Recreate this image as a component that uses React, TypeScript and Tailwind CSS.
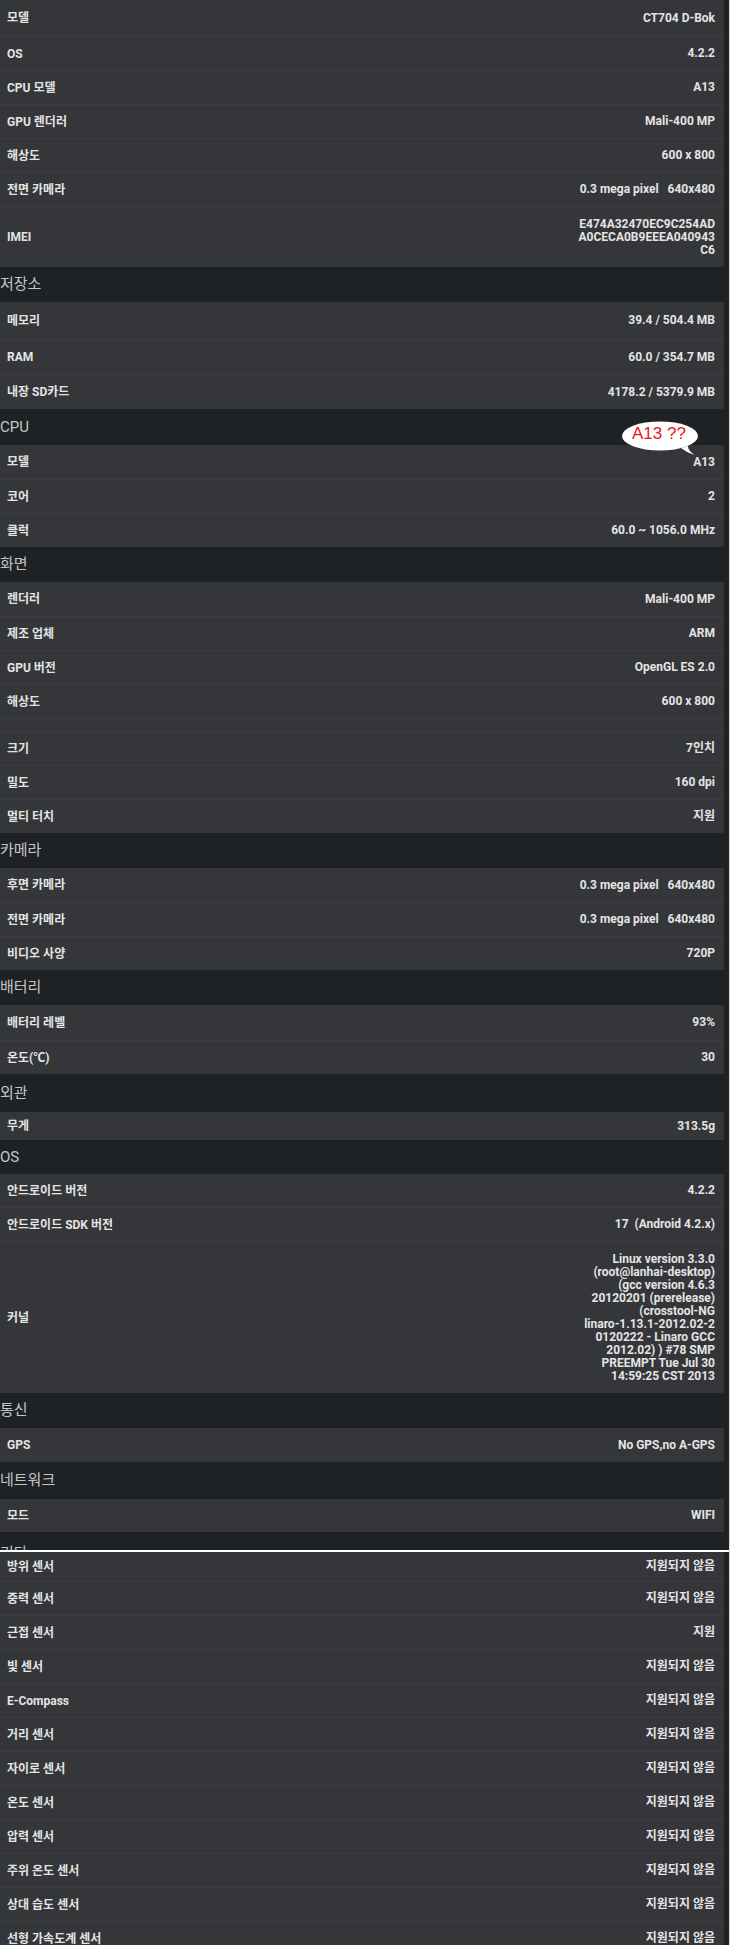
import React from "react";

type Row = { label: string; value: React.ReactNode; h?: string };

const font = "font-['Roboto','Noto_Sans_CJK_KR',sans-serif]";

function InfoRow({ label, value, h = "h-[34px]", first = false }: Row & { first?: boolean }) {
  return (
    <div
      className={`flex items-center justify-between pl-[7px] pr-[9px] ${h} ${
        first ? "" : "border-t border-[#3c3d41]"
      }`}
    >
      <span className="text-[12px] font-bold text-[#e4e4e4]">{label}</span>
      <span className="whitespace-pre text-right text-[12px] font-bold leading-[13px] text-[#e4e4e4]">
        {value}
      </span>
    </div>
  );
}

function Card({ rows }: { rows: Row[] }) {
  return (
    <div className="mr-[5px] overflow-hidden rounded-r-[2px] bg-[#353639]">
      {rows.map((r, i) => (
        <InfoRow key={r.label + i} {...r} first={i === 0} />
      ))}
    </div>
  );
}

function Header({ title, h = "h-[35px]" }: { title: string; h?: string }) {
  return (
    <div className={`flex items-center ${h}`}>
      <span className="text-[15px] text-[#c6c6c6]">{title}</span>
    </div>
  );
}

function Bubble() {
  return (
    <div className="absolute left-[621px] top-[12px] h-[36px] w-[80px]">
      <svg width="80" height="36" viewBox="0 0 80 36">
        <path
          d="M60 27 C 66 31, 70 33, 74 34 C 69 31, 67 28, 67 25 Z"
          fill="#ffffff"
        />
        <ellipse cx="39" cy="15" rx="38" ry="14.5" fill="#ffffff" />
      </svg>
      <span className="absolute left-[11px] top-[3px] font-['Liberation_Sans',sans-serif] text-[17px] leading-[20px] text-[#e3161b]">
        A13 ??
      </span>
    </div>
  );
}

const sensors: string[] = [
  "중력 센서",
  "근접 센서",
  "빛 센서",
  "E-Compass",
  "거리 센서",
  "자이로 센서",
  "온도 센서",
  "압력 센서",
  "주위 온도 센서",
  "상대 습도 센서",
  "선형 가속도계 센서",
];

export default function App() {
  return (
    <div className={`flex h-[1945px] w-[740px] overflow-hidden bg-white ${font}`}>
      <div className="w-[729px] shrink-0 bg-[#1f2225]">
        <Card
          rows={[
            { label: "모델", value: "CT704 D-Bok", h: "h-[36px]" },
            { label: "OS", value: "4.2.2" },
            { label: "CPU 모델", value: "A13" },
            { label: "GPU 렌더러", value: "Mali-400 MP" },
            { label: "해상도", value: "600 x 800" },
            { label: "전면 카메라", value: "0.3 mega pixel   640x480" },
            {
              label: "IMEI",
              value: "E474A32470EC9C254AD\nA0CECA0B9EEEA040943\nC6",
              h: "h-[61px]",
            },
          ]}
        />

        <Header title="저장소" />
        <Card
          rows={[
            { label: "메모리", value: "39.4 / 504.4 MB", h: "h-[37px]" },
            { label: "RAM", value: "60.0 / 354.7 MB", h: "h-[35px]" },
            { label: "내장 SD카드", value: "4178.2 / 5379.9 MB", h: "h-[35px]" },
          ]}
        />

        <div className="relative">
          <Header title="CPU" h="h-[36px]" />
          <Card
            rows={[
              { label: "모델", value: "A13" },
              { label: "코어", value: "2" },
              { label: "클럭", value: "60.0 ~ 1056.0 MHz" },
            ]}
          />
          <Bubble />
        </div>

        <Header title="화면" />
        <Card
          rows={[
            { label: "렌더러", value: "Mali-400 MP" },
            { label: "제조 업체", value: "ARM" },
            { label: "GPU 버전", value: "OpenGL ES 2.0" },
            { label: "해상도", value: "600 x 800" },
            { label: "", value: "", h: "h-[13px]" },
            { label: "크기", value: "7인치" },
            { label: "밀도", value: "160 dpi" },
            { label: "멀티 터치", value: "지원" },
          ]}
        />

        <Header title="카메라" />
        <Card
          rows={[
            { label: "후면 카메라", value: "0.3 mega pixel   640x480" },
            { label: "전면 카메라", value: "0.3 mega pixel   640x480" },
            { label: "비디오 사양", value: "720P" },
          ]}
        />

        <Header title="배터리" />
        <Card
          rows={[
            { label: "배터리 레벨", value: "93%", h: "h-[35px]" },
            { label: "온도(℃)", value: "30" },
          ]}
        />

        <Header title="외관" h="h-[38px]" />
        <Card rows={[{ label: "무게", value: "313.5g", h: "h-[28px]" }]} />

        <Header title="OS" h="h-[34px]" />
        <Card
          rows={[
            { label: "안드로이드 버전", value: "4.2.2", h: "h-[33px]" },
            { label: "안드로이드 SDK 버전", value: "17  (Android 4.2.x)" },
            {
              label: "커널",
              value:
                "Linux version 3.3.0\n(root@lanhai-desktop)\n(gcc version 4.6.3\n20120201 (prerelease)\n(crosstool-NG\nlinaro-1.13.1-2012.02-2\n0120222 - Linaro GCC\n2012.02) ) #78 SMP\nPREEMPT Tue Jul 30\n14:59:25 CST 2013",
              h: "h-[152px]",
            },
          ]}
        />

        <Header title="통신" />
        <Card rows={[{ label: "GPS", value: "No GPS,no A-GPS" }]} />

        <Header title="네트워크" h="h-[37px]" />
        <Card rows={[{ label: "모드", value: "WIFI", h: "h-[33px]" }]} />

        <div className="h-[18px] overflow-hidden">
          <span className="block pt-[12px] text-[15px] leading-[18px] text-[#c6c6c6]">
            기타
          </span>
        </div>
        <div className="h-[2px] bg-white" />

        <Card
          rows={[
            { label: "방위 센서", value: "지원되지 않음", h: "h-[29px]" },
            ...sensors.map((s) => ({
              label: s,
              value: s === "근접 센서" ? "지원" : "지원되지 않음",
            })),
          ]}
        />
      </div>
      <div className="flex-1 border-l border-[#d8d8d8] bg-white" />
    </div>
  );
}
